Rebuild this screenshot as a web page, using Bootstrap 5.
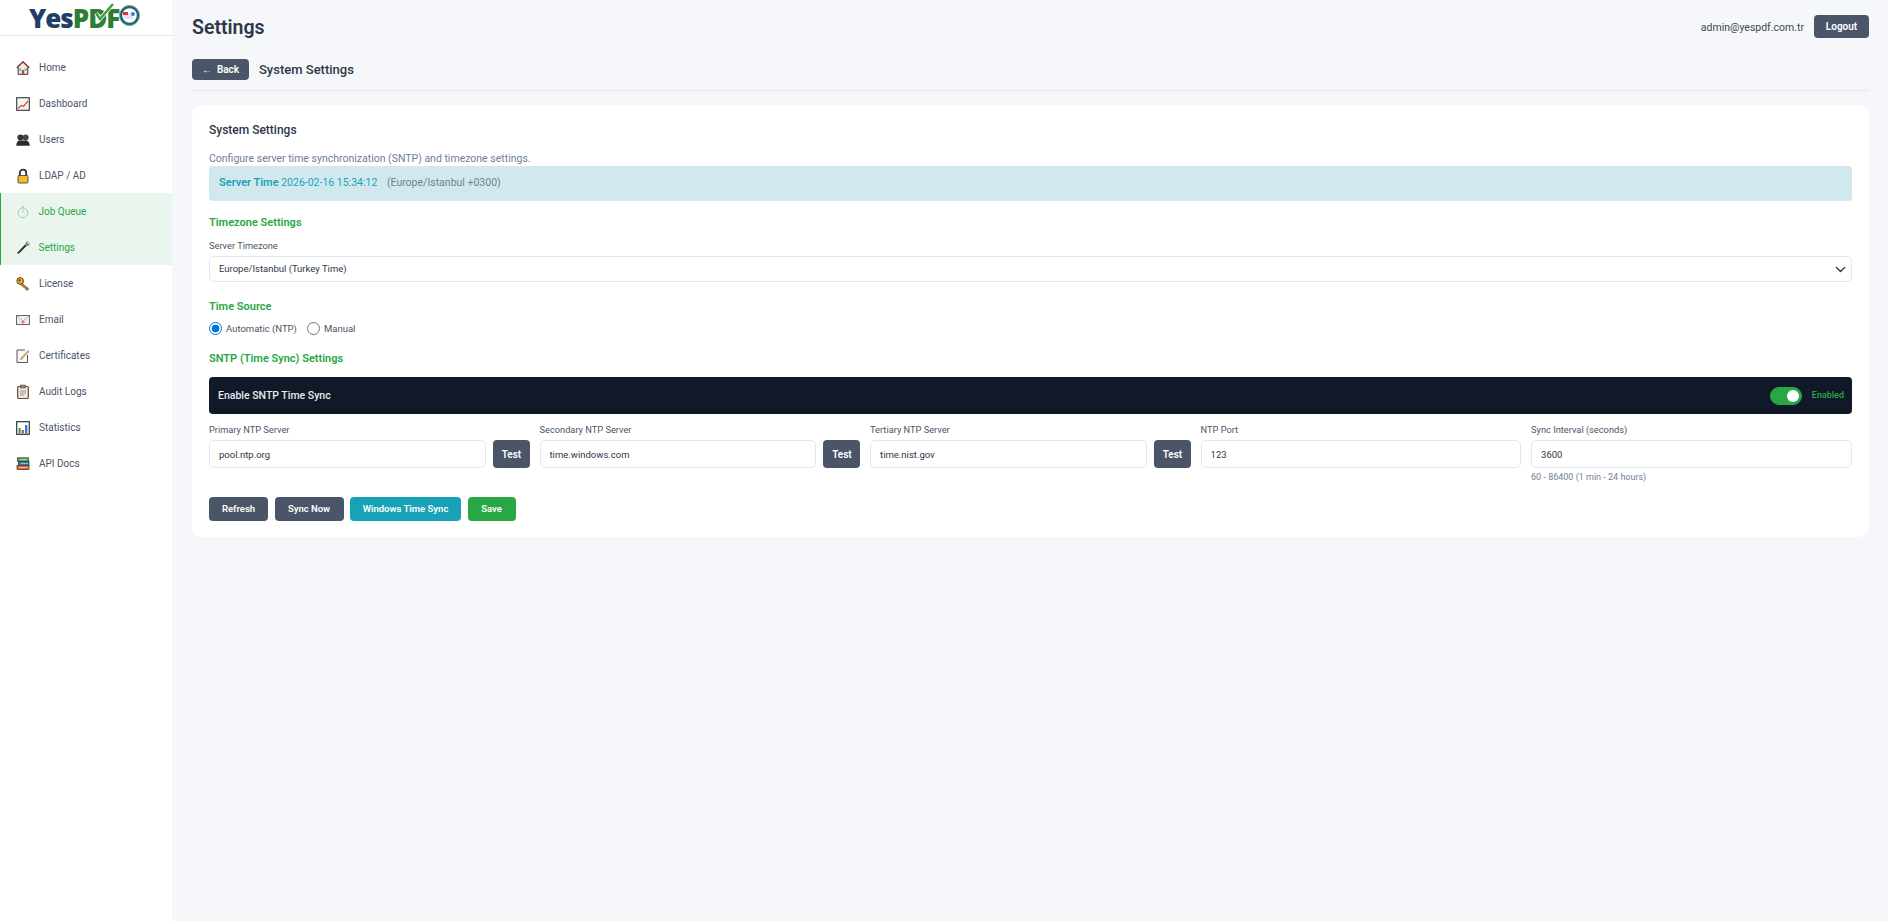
<!DOCTYPE html>
<html lang="en">
<head>
    <meta charset="UTF-8">
    <meta name="viewport" content="width=device-width, initial-scale=1.0">
    <title>Settings</title>
    <link href="https://cdn.jsdelivr.net/npm/bootstrap@5.3.0/dist/css/bootstrap.min.css" rel="stylesheet">
    <style>
        body { background: #f5f7fb; font-family: Roboto, "Liberation Sans", sans-serif; color: #2d3748; font-size: 11px; }
        .app-shell { min-height: 921px; }
        .side-panel { width: 172px; flex: none; background: #fff; }
        .logo-box { height: 36px; border-bottom: 1px solid #e6e8ee; padding-left: 29px; font-family: "Open Sans", sans-serif; font-weight: 800; font-size: 26px; letter-spacing: -1px; line-height: 36px; }
        .logo-yes { color: #1f3f66; }
        .logo-pdf { color: #2e7d32; position: relative; }
        .logo-check { position: absolute; left: 20px; top: 2px; }
        .logo-box > svg { margin-top: -5px; }
        .side-menu { padding-top: 13px; }
        .side-link { height: 36px; padding: 1px 0 0 16px; gap: 9px; color: #4a5568; text-decoration: none; font-size: 10px; border-left: 0 solid transparent; }
        .side-link svg { width: 14px; height: 16px; flex: none; }
        .side-link.on { background: #eaf5ed; color: #28a745; border-left: 1.5px solid #28a745; padding-left: 14.5px; }
        .main-area { padding: 0 19px 0 20px; min-width: 0; }
        .top-bar { height: 55px; }
        .page-title { font-size: 19.5px; font-weight: 600; color: #2d3748; margin: 0; }
        .user-mail { font-size: 10.5px; color: #3d4756; margin-right: 10px; }
        .btn-slate { background: #4a5568; color: #fff; border: 0; border-radius: 4px; font-size: 10px; font-weight: 600; }
        .btn-slate:hover { background: #3d4756; color: #fff; }
        .btn-logout { width: 55px; height: 23px; padding: 0; margin-top: -3px; }
        .sub-head { height: 32px; border-bottom: 1px solid #e6e8ee; padding-bottom: 10px; gap: 10px; margin-top: 4px; }
        .btn-back { width: 57px; height: 21px; padding: 0; }
        .sub-title { font-size: 13px; font-weight: 500; margin: 0; line-height: 21px; }
        .panel-box { margin-top: 14px; background: #fff; border: 0; border-radius: 10px; padding: 17px; height: 432px; }
        .panel-title { font-size: 12px; font-weight: 500; margin: 0 0 12px; line-height: 17px; }
        .panel-desc { font-size: 10.5px; color: #718096; line-height: 15px; }
        .time-box { height: 35px; background: #d1e9ee; border: 0; border-radius: 4px; margin: 0; padding: 0 10px; font-size: 10.5px; color: #17a2b8; }
        .time-box strong { font-size: 11px; }
        .time-zone { color: #718096; margin-left: 7px; }
        .green-head { color: #28a745; font-size: 11px; font-weight: 600; margin: 0; line-height: 16px; }
        .head-tz { margin-top: 14px; margin-bottom: 8px; }
        .head-src { margin-top: 17px; margin-bottom: 7px; }
        .head-sntp { margin-top: 15px; margin-bottom: 10px; }
        .field-label { font-size: 9.25px; color: #4a5568; margin: 0 0 4px; line-height: 13px; display: block; }
        .field-input { height: 28px; font-size: 9.5px; color: #2d3748; border: 1px solid #e2e8f0; border-radius: 5px; padding: 0 9px; }
        select.field-input { height: 26px; background-position: right 4px center; background-size: 13px 11px; }
        .radio-row { gap: 10px; font-size: 9.5px; color: #4a5568; }
        .radio-row .form-check { min-height: 0; margin: 0; padding-left: 17px; }
        .radio-row .form-check-input { width: 13px; height: 13px; margin: 0 0 0 -17px; border: 1px solid #767676; }
        .radio-row .form-check-input:checked { border-color: #0075d4; background: radial-gradient(circle, #0075d4 0 3.6px, #fff 4.2px 100%); }
        .radio-row .form-check-label { line-height: 14px; }
        .sync-bar { height: 37px; background: #111827; border-radius: 4px; padding: 0 8px 0 9px; color: #e8ebf0; font-size: 10.5px; font-weight: 500; }
        .sync-state { color: #28a745; font-size: 9px; margin-left: 10px; }
        .sync-switch { min-height: 0; margin: 0; padding: 0; }
        .sync-switch .form-check-input { width: 32px; height: 18px; margin: 0; float: none; display: block; background-color: #28a745; border-color: #28a745; }
        .ntp-grid { display: grid; grid-template-columns: repeat(5, 1fr); gap: 9.6px; margin-top: 9px; }
        .test-row { gap: 7px; }
        .btn-test { width: 37px; height: 28px; padding: 0; flex: none; }
        .hint-text { font-size: 9px; color: #718096; margin-top: 3px; line-height: 13px; }
        .btn-act { height: 24px; padding: 0; color: #fff; border: 0; border-radius: 4px; font-size: 9.5px; font-weight: 600; }
        .btn-teal { background: #17a2b8; }
        .btn-green { background: #28a745; }
        .act-row { margin-top: 13px; gap: 6.5px; }
        .w-refresh { width: 59px; } .w-sync { width: 69px; } .w-win { width: 111px; } .w-save { width: 48px; }
    </style>
</head>
<body>
<div class="app-shell d-flex">
    <aside class="side-panel">
        <div class="logo-box d-flex align-items-center"><span class="logo-yes">Yes</span><span class="logo-pdf">PDF<svg class="logo-check" width="22" height="21" viewBox="0 0 22 21"><path d="M3 11l4 6L20 2" fill="none" stroke="#fff" stroke-width="4"/><path d="M3 11l4 6L20 2" fill="none" stroke="#3f9a3a" stroke-width="2.4"/></svg></span>
            <svg width="21" height="21" viewBox="0 0 21 21"><circle cx="10.5" cy="10.5" r="8.6" fill="#fff" stroke="#1f5f8f" stroke-width="2.6"/><circle cx="10.5" cy="10.5" r="10" fill="none" stroke="#6aa84f" stroke-width="1"/><rect x="5" y="8" width="9" height="6" rx="1" fill="#dfe6ee"/><rect x="4" y="7" width="5" height="3" fill="#d33"/><circle cx="14" cy="9" r="2" fill="#3b7fb5"/></svg>
        </div>
        <nav class="side-menu d-flex flex-column">
            <a class="side-link d-flex align-items-center" href="#"><svg viewBox="0 0 14 16"><path d="M7 1.5 .8 7.5h1.4v6.8h9.6V7.5h1.4z" fill="#f4ead8" stroke="#333" stroke-width="1"/><path d="M1.5 7.2 7 2l5.5 5.2" fill="none" stroke="#9a3b2a" stroke-width="1.2"/><rect x="3" y="8.3" width="2.4" height="2.4" fill="#5bc0de"/><rect x="8.6" y="8.3" width="2.4" height="2.4" fill="#5bc0de"/><rect x="5.8" y="10" width="2.4" height="4.3" fill="#d9432f"/></svg>Home</a>
            <a class="side-link d-flex align-items-center" href="#"><svg viewBox="0 0 14 16"><rect x=".7" y="1.7" width="12.6" height="12.6" fill="#f5f5f5" stroke="#444" stroke-width="1.2"/><path d="M2 12.5 5.5 9.5l2 1L12 5" fill="none" stroke="#e0452c" stroke-width="1.2"/></svg>Dashboard</a>
            <a class="side-link d-flex align-items-center" href="#"><svg viewBox="0 0 14 16"><circle cx="4.4" cy="5.5" r="3" fill="#333"/><circle cx="9.6" cy="5.5" r="3" fill="#444"/><path d="M.3 13.8c0-4 2-5.3 4-5.3h5c2 0 4.4 1.3 4.4 5.3z" fill="#2b2b2b"/></svg>Users</a>
            <a class="side-link d-flex align-items-center" href="#"><svg viewBox="0 0 14 16"><path d="M3.8 8V4.8a3.2 3.2 0 0 1 6.4 0V8" fill="none" stroke="#333" stroke-width="1.8"/><rect x="2" y="7.5" width="10" height="7.5" rx="1" fill="#f6b92b" stroke="#333" stroke-width=".8"/></svg>LDAP / AD</a>
            <a class="side-link on d-flex align-items-center" href="#"><svg viewBox="0 0 14 16"><circle cx="7" cy="8.8" r="4.8" fill="none" stroke="#9fd0b4" stroke-width="1"/><path d="M7 8.8V5.5M5.8 2.5h2.4M7 2.5V4" stroke="#9fd0b4" stroke-width="1" fill="none"/></svg>Job Queue</a>
            <a class="side-link on d-flex align-items-center" href="#"><svg viewBox="0 0 14 16"><path d="M2.5 14 1.2 12.7 9 4.5l1.6 1.6z" fill="#333"/><path d="M9.3 4.3a2.6 2.6 0 0 1 3.4-2.6l-1.6 1.6.9 1 1.6-1.5a2.6 2.6 0 0 1-3.2 3.2z" fill="#777"/></svg>Settings</a>
            <a class="side-link d-flex align-items-center" href="#"><svg viewBox="0 0 14 16"><path d="M5.5 7 12.7 12.7 11.6 14.2 9.8 13.6 9.4 12 8 11.6 4.4 8.4z" fill="#c98a10" stroke="#333" stroke-width=".6"/><circle cx="4.2" cy="4.9" r="3.4" fill="#f0a818" stroke="#333" stroke-width=".8"/><circle cx="3.5" cy="4.2" r="1" fill="#333"/></svg>License</a>
            <a class="side-link d-flex align-items-center" href="#"><svg viewBox="0 0 14 16"><rect x=".5" y="3.5" width="13" height="9" fill="#eee" stroke="#666" stroke-width="1"/><path d="M1 4 7 9l6-5" fill="none" stroke="#aaa" stroke-width=".8"/><circle cx="7" cy="10" r="1.6" fill="#e77c6e"/></svg>Email</a>
            <a class="side-link d-flex align-items-center" href="#"><svg viewBox="0 0 14 16"><path d="M11.5 7v7.5H1V2h8" fill="#fafafa" stroke="#555" stroke-width="1"/><path d="M5 10 12 2.5l1 1-7 7.5-1.5.5z" fill="#f6c64a" stroke="#444" stroke-width=".4"/></svg>Certificates</a>
            <a class="side-link d-flex align-items-center" href="#"><svg viewBox="0 0 14 16"><rect x="1.7" y="2.5" width="10.6" height="12" rx="1" fill="#efe8dc" stroke="#6b4a34" stroke-width="1.2"/><rect x="4.5" y="1" width="5" height="3" fill="#888" stroke="#444" stroke-width=".5"/><path d="M4 7h6M4 9h6M4 11h4" stroke="#999" stroke-width="1"/></svg>Audit Logs</a>
            <a class="side-link d-flex align-items-center" href="#"><svg viewBox="0 0 14 16"><rect x=".7" y="1.7" width="12.6" height="12.6" fill="#fff" stroke="#333" stroke-width="1.2"/><rect x="2.5" y="8" width="2.2" height="5.5" fill="#2fa84f"/><rect x="5.7" y="10" width="2.2" height="3.5" fill="#e0452c"/><rect x="9" y="5" width="2.4" height="8.5" fill="#2f7fd0"/></svg>Statistics</a>
            <a class="side-link d-flex align-items-center" href="#"><svg viewBox="0 0 14 16"><rect x="1.5" y="1.8" width="11" height="3.7" fill="#4ea84f" stroke="#333" stroke-width=".7"/><rect x="2.5" y="5.6" width="10.5" height="3.7" fill="#3d76b8" stroke="#333" stroke-width=".7"/><rect x="1" y="9.5" width="12" height="4" fill="#e2672f" stroke="#333" stroke-width=".7"/><path d="M4 3.6h7M5 7.4h7M3 11.5h9" stroke="#eee" stroke-width=".6"/></svg>API Docs</a>
        </nav>
    </aside>
    <main class="main-area flex-grow-1">
        <header class="top-bar d-flex align-items-center justify-content-between">
            <h1 class="page-title">Settings</h1>
            <div class="d-flex align-items-center">
                <span class="user-mail">admin@yespdf.com.tr</span>
                <button class="btn btn-slate btn-logout">Logout</button>
            </div>
        </header>
        <div class="sub-head d-flex align-items-start">
            <button class="btn btn-slate btn-back">&#8592;&nbsp; Back</button>
            <h2 class="sub-title">System Settings</h2>
        </div>
        <section class="panel-box">
            <h3 class="panel-title">System Settings</h3>
            <div class="panel-desc">Configure server time synchronization (SNTP) and timezone settings.</div>
            <div class="alert time-box d-flex align-items-center"><span><strong class="fw-semibold">Server Time</strong> 2026-02-16 15:34:12 <span class="time-zone">(Europe/Istanbul +0300)</span></span></div>
            <h4 class="green-head head-tz">Timezone Settings</h4>
            <label class="field-label" for="tz">Server Timezone</label>
            <select id="tz" class="form-select field-input"><option>Europe/Istanbul (Turkey Time)</option></select>
            <h4 class="green-head head-src">Time Source</h4>
            <div class="radio-row d-flex">
                <div class="form-check"><input class="form-check-input" type="radio" name="src" id="s1" checked><label class="form-check-label" for="s1">Automatic (NTP)</label></div>
                <div class="form-check"><input class="form-check-input" type="radio" name="src" id="s2"><label class="form-check-label" for="s2">Manual</label></div>
            </div>
            <h4 class="green-head head-sntp">SNTP (Time Sync) Settings</h4>
            <div class="sync-bar d-flex align-items-center justify-content-between">
                <span>Enable SNTP Time Sync</span>
                <div class="d-flex align-items-center">
                    <div class="form-check form-switch sync-switch"><input class="form-check-input" type="checkbox" checked></div>
                    <span class="sync-state">Enabled</span>
                </div>
            </div>
            <div class="ntp-grid">
                <div><label class="field-label">Primary NTP Server</label><div class="d-flex test-row"><input class="form-control field-input" value="pool.ntp.org"><button class="btn btn-slate btn-test">Test</button></div></div>
                <div><label class="field-label">Secondary NTP Server</label><div class="d-flex test-row"><input class="form-control field-input" value="time.windows.com"><button class="btn btn-slate btn-test">Test</button></div></div>
                <div><label class="field-label">Tertiary NTP Server</label><div class="d-flex test-row"><input class="form-control field-input" value="time.nist.gov"><button class="btn btn-slate btn-test">Test</button></div></div>
                <div><label class="field-label">NTP Port</label><input class="form-control field-input" value="123"></div>
                <div><label class="field-label">Sync Interval (seconds)</label><input class="form-control field-input" value="3600"><div class="hint-text">60 - 86400 (1 min - 24 hours)</div></div>
            </div>
            <div class="d-flex act-row">
                <button class="btn btn-slate btn-act w-refresh">Refresh</button>
                <button class="btn btn-slate btn-act w-sync">Sync Now</button>
                <button class="btn btn-act btn-teal w-win">Windows Time Sync</button>
                <button class="btn btn-act btn-green w-save">Save</button>
            </div>
        </section>
    </main>
</div>
<script src="https://cdn.jsdelivr.net/npm/bootstrap@5.3.0/dist/js/bootstrap.bundle.min.js"></script>
</body>
</html>
